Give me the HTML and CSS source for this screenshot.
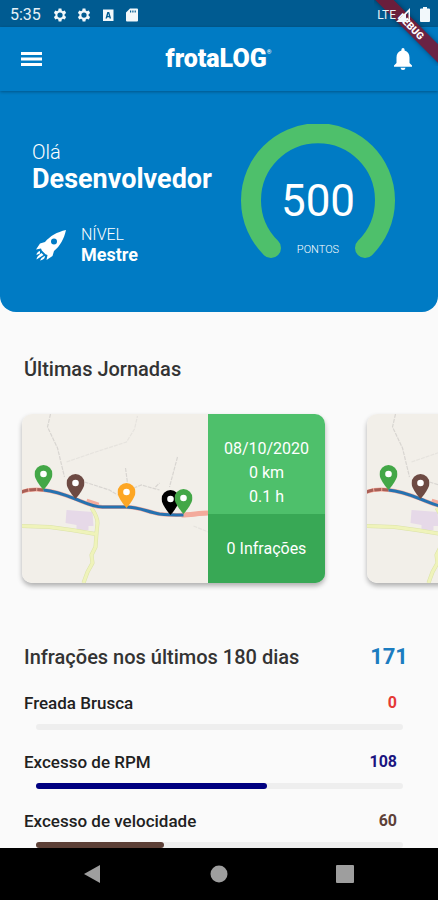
FILE: index.html
```html
<!DOCTYPE html>
<html lang="pt-BR">
<head>
    <meta charset="UTF-8">
    <meta name="viewport" content="width=device-width, initial-scale=1.0">
    <title>frotaLOG</title>
    <link rel="stylesheet" href="styles.css">
</head>
<body>
    <!-- Shared map drawing used by every journey card -->
    <svg class="defs" width="0" height="0" aria-hidden="true">
        <symbol id="pin" viewBox="0 0 18 25">
            <path d="M9 0a9 9 0 0 0-9 9c0 6 9 16 9 16s9-10 9-16a9 9 0 0 0-9-9z"/>
            <circle cx="9" cy="9" r="3.3" fill="#fff"/>
        </symbol>
        <symbol id="map" viewBox="0 0 187 169" preserveAspectRatio="xMidYMid slice">
            <rect width="187" height="169" fill="#f2efe9"/>
            <g fill="none" stroke="#d8d5d1" stroke-width="1.2" stroke-dasharray="4 1">
                <path d="M29 0l-3 13 10 21 7 29M63 68l25 8 8 5M104 54l2 15M112 74l8-3 18 5M134 73l4-4M156 43l-8 30"/>
                <path d="M45 48l26-9 34-11 8-13 3-13M172 112l15 6" stroke="#e6e3de"/>
            </g>
            <path d="M45 96l26 2 1 14-5 0 0 4-12 1 0-6-11-2z" fill="#e6d9e8"/>
            <g fill="none" stroke-linejoin="round">
                <path d="M0 112l28 1 22 3 24 4M70 94c4 6 6 10 6 15l-1 10-1 14-4 8 1 8-5 9-4 11" stroke="#dbe2a8" stroke-width="4"/>
                <path d="M0 112l28 1 22 3 24 4M70 94c4 6 6 10 6 15l-1 10-1 14-4 8 1 8-5 9-4 11" stroke="#eff3ba" stroke-width="3"/>
                <path d="M0 78c8-3 15-3 22-2 12 1 22 5 32 9s18 8 27 8h24c13 0 21 5 33 7 16 2 32 1 49-1" stroke="#f3aa9b" stroke-width="4"/>
                <path d="M160 101c9 0 18-2 27-2" stroke="#f3aa9b" stroke-width="5"/>
                <path d="M65 87l12 4" stroke="#f3aa9b" stroke-width="5"/>
                <path d="M0 78c8-3 15-3 22-2" stroke="#a95f56" stroke-width="3" stroke-dasharray="7 1"/>
                <path d="M22 76c12 1 22 5 32 9s18 8 27 8h24c13 0 21 5 33 7 8 1 15 1 24 1" stroke="#2672b0" stroke-width="3"/>
            </g>
            <use href="#pin" x="13" y="51" width="18" height="25" fill="#43a747"/>
            <use href="#pin" x="45" y="60" width="18" height="25" fill="#6d4a43"/>
            <use href="#pin" x="96" y="69" width="18" height="25" fill="#fda624"/>
            <use href="#pin" x="140" y="76" width="18" height="25" fill="#000"/>
            <use href="#pin" x="153" y="75" width="18" height="25" fill="#43a747"/>
        </symbol>
        <symbol id="gear" viewBox="0 0 24 24">
            <path fill-rule="evenodd" d="M9.6 1h4.8l.6 3.3 2 1.1 3.100-1.100 2.400 4.100-2.600 2.300v2.600l2.600 2.300-2.400 4.100-3.100-1.100-2 1.100-.6 3.300H9.600L9 19.700l-2-1.100-3.100 1.100-2.400-4.100 2.600-2.300v-2.600L1.500 8.400l2.400-4.100L7 5.400l2-1.100zM12 7.500a4.500 4.500 0 1 0 0 9 4.500 4.500 0 0 0 0-9z"/>
        </symbol>
    </svg>

    <div class="status-bar">
        <span class="clock">5:35</span>
        <svg class="status-icon" viewBox="0 0 24 24"><use href="#gear"/></svg>
        <svg class="status-icon" viewBox="0 0 24 24"><use href="#gear"/></svg>
        <svg class="status-icon" viewBox="0 0 14 14">
            <path fill-rule="evenodd" d="M2 1.500h10.500v11.500H2zM4.500 10.500h1.500l.3-1.200h2l.3 1.200h1.500L8.200 4H6.300zM6.700 8l.6-2.500.6 2.500z"/>
        </svg>
        <svg class="status-icon" viewBox="0 0 14 14">
            <path fill-rule="evenodd" d="M5 .5h7a1 1 0 0 1 1 1v11a1 1 0 0 1-1 1H2a1 1 0 0 1-1-1V4.500zM5 2.500v2h1.200v-2zM7.300 2.500v2h1.200v-2zM9.600 2.500v2h1.200v-2z"/>
        </svg>
        <div class="connection">
            <span class="network">LTE</span>
            <svg class="status-icon" viewBox="0 0 14 14"><path fill-rule="evenodd" d="M14 0v14H0zM12.500 4v8.500H10V6.500z"/></svg>
        </div>
        <svg class="battery" viewBox="0 0 10 15"><path d="M3 0h4v1.500h2a1 1 0 0 1 1 1V14a1 1 0 0 1-1 1H1a1 1 0 0 1-1-1V2.500a1 1 0 0 1 1-1h2z"/></svg>
    </div>
    <div class="debug"><span class="debug-label">DEBUG</span></div>

    <header class="app-bar">
        <button class="icon-button" aria-label="Menu">
            <svg width="22" height="16" viewBox="0 0 22 16"><path d="M0 1h21v3H0zM0 6.500h21v3H0zM0 12h21v3H0z"/></svg>
        </button>
        <h1 class="logo">frotaLOG<span class="logo-mark">®</span></h1>
        <button class="icon-button" aria-label="Notificações">
            <svg width="18" height="22" viewBox="0 0 18 22"><path d="M9 22a2.500 2.500 0 0 0 2.500-2.200h-5A2.500 2.500 0 0 0 9 22zM15.500 15V9.500c0-3.500-1.800-6.200-4.900-7V1.700a1.600 1.600 0 0 0-3.200 0v.8c-3.100.8-4.900 3.500-4.900 7V15L0 17.500v1.300h18v-1.300z"/></svg>
        </button>
    </header>

    <main class="content">
        <section class="hero">
            <div class="profile">
                <p class="hello">Olá</p>
                <p class="name">Desenvolvedor</p>
                <div class="level">
                    <svg width="32" height="32" viewBox="0 0 32 32">
                        <path fill-rule="evenodd" d="M31 1C22 3 15 7 10 13l-5 1.500-4 6 5-1 .8 2 3.700 3.700 2 .8-1 5 6-4L19 22c6-5 10-12 12-21zM19 9.500a3 3 0 1 1 0 6 3 3 0 0 1 0-6z"/>
                        <path d="M5 22c-2 .5-3.500 2-3.500 4l3.500-1.500zM6.500 24c-3 2-5 4.500-5 6.500l7-4.500zM9.500 27l-3 2-1.500 2.500c2.500-.3 4.500-1.500 5-4z"/>
                    </svg>
                    <div>
                        <p class="level-label">NÍVEL</p>
                        <p class="level-name">Mestre</p>
                    </div>
                </div>
            </div>
            <div class="gauge">
                <svg class="gauge-arc" viewBox="0 0 154 154">
                    <path d="M30 124a67 67 0 1 1 94 0" fill="none" stroke="#4ec06b" stroke-width="20" stroke-linecap="round"/>
                </svg>
                <div class="gauge-text">
                    <span class="points">500</span>
                    <span class="points-label">PONTOS</span>
                </div>
            </div>
        </section>

        <section class="journeys">
            <h2 class="title">Últimas Jornadas</h2>
            <div class="carousel">
                <article class="card">
                    <svg class="map"><use href="#map"/></svg>
                    <div class="card-info">
                        <p class="card-data">08/10/2020<br>0 km<br>0.1 h</p>
                        <p class="card-infractions">0 Infrações</p>
                    </div>
                </article>
                <article class="card">
                    <svg class="map"><use href="#map"/></svg>
                    <div class="card-info"></div>
                </article>
            </div>
        </section>

        <section class="infractions">
            <div class="infractions-head">
                <h2 class="title">Infrações nos últimos 180 dias</h2>
                <span class="total">171</span>
            </div>
            <div class="item">
                <div class="item-head"><span>Freada Brusca</span><span class="count red">0</span></div>
                <div class="track"></div>
            </div>
            <div class="item">
                <div class="item-head"><span>Excesso de RPM</span><span class="count navy">108</span></div>
                <div class="track"><div class="fill fill-navy" style="width: 63%"></div></div>
            </div>
            <div class="item">
                <div class="item-head"><span>Excesso de velocidade</span><span class="count brown">60</span></div>
                <div class="track"><div class="fill fill-brown" style="width: 35%"></div></div>
            </div>
        </section>
    </main>

    <nav class="nav-bar">
        <button class="nav-button" aria-label="Voltar">
            <svg width="18" height="18" viewBox="0 0 18 18"><path d="M16 0v18L0 9z"/></svg>
        </button>
        <button class="nav-button" aria-label="Início">
            <svg width="18" height="18" viewBox="0 0 18 18"><circle cx="9" cy="9" r="8.500"/></svg>
        </button>
        <button class="nav-button" aria-label="Recentes">
            <svg width="18" height="18" viewBox="0 0 18 18"><rect width="18" height="18" rx="1"/></svg>
        </button>
    </nav>
</body>
</html>
```

FILE: styles.css
```css
* {
    box-sizing: border-box;
}
body {
    margin: 0;
    height: 100vh;
    display: flex;
    flex-direction: column;
    overflow: hidden;
    background-color: #fafafa;
    color: #212121;
    font-family: Roboto, sans-serif;
}
h1, h2, p {
    margin: 0;
}
button {
    padding: 0;
    border: none;
    background: none;
    cursor: pointer;
}
svg {
    display: block;
}
.defs {
    position: absolute;
}

/* Status bar */
.status-bar {
    flex: none;
    display: flex;
    align-items: center;
    gap: 10px;
    height: 27px;
    padding: 2px 8px 0 10px;
    background-color: #005b91;
    color: #e6f0f6;
    fill: #f2f8fb;
}
.clock {
    font-size: 16px;
    margin-right: 2px;
}
.status-icon {
    width: 14px;
    height: 14px;
}
/* system icons stay above the debug ribbon */
.connection {
    z-index: 3;
    display: flex;
    align-items: center;
    margin-left: auto;
}
.network {
    font-size: 12px;
}
.battery {
    z-index: 3;
    width: 10px;
    height: 15px;
}
.debug {
    position: absolute;
    top: 0;
    right: 0;
    z-index: 2;
    width: 64px;
    height: 66px;
    overflow: hidden;
}
.debug-label {
    position: absolute;
    top: 20px;
    left: -13px;
    width: 100px;
    height: 13px;
    background-color: rgba(125, 20, 45, 0.85);
    box-shadow: 0 0 5px rgba(0, 0, 0, 0.4);
    color: #fff;
    font-size: 10px;
    font-weight: 900;
    line-height: 13px;
    text-align: center;
    transform: rotate(45deg);
}

/* App bar */
.app-bar {
    flex: none;
    z-index: 1;
    display: flex;
    justify-content: space-between;
    align-items: center;
    height: 64px;
    padding: 0 26px 0 21px;
    background-color: #007bc4;
    box-shadow: 0 1px 3px rgba(0, 0, 0, 0.3);
}
.icon-button {
    fill: #fff;
}
.logo {
    display: flex;
    color: #fff;
    font-size: 25px;
    font-weight: 900;
    line-height: 28px;
}
.logo-mark {
    font-size: 6px;
    line-height: 14px;
}

.content {
    flex: 1;
    min-height: 0;
    overflow: hidden;
}

/* Driver summary */
.hero {
    display: flex;
    justify-content: space-between;
    padding: 33px 43px 34px 32px;
    border-radius: 0 0 16px 16px;
    background-color: #007bc4;
    color: #fff;
}
.profile {
    padding-top: 16px;
}
.hello {
    font-size: 20px;
    font-weight: 300;
    line-height: 24px;
}
.name {
    font-size: 27px;
    font-weight: 700;
    line-height: 30px;
}
.level {
    display: flex;
    align-items: center;
    gap: 14px;
    margin-top: 31px;
    padding-left: 3px;
    fill: #fff;
}
.level-label {
    font-size: 16px;
    font-weight: 300;
    line-height: 20px;
}
.level-name {
    font-size: 18px;
    font-weight: 700;
    line-height: 20px;
}
.gauge {
    display: grid;
    width: 154px;
    height: 154px;
}
.gauge-arc, .gauge-text {
    grid-area: 1 / 1;
}
.gauge-text {
    display: flex;
    flex-direction: column;
    align-items: center;
    padding-top: 50px;
}
.points {
    font-size: 44px;
    line-height: 54px;
}
.points-label {
    margin-top: 15px;
    font-size: 11px;
    font-weight: 300;
    line-height: 14px;
}

/* Journeys */
.title {
    font-size: 20px;
    font-weight: 500;
    line-height: 24px;
    color: #333;
}
.journeys .title {
    padding: 45px 24px 0;
}
.carousel {
    display: flex;
    gap: 42px;
    overflow: hidden;
    padding: 33px 22px;
}
.card {
    flex: 0 0 303px;
    display: flex;
    height: 169px;
    overflow: hidden;
    border-radius: 10px;
    box-shadow: 0 3px 5px rgba(0, 0, 0, 0.3);
}
.map {
    flex: 1;
    height: 169px;
}
.card-info {
    width: 117px;
    display: flex;
    flex-direction: column;
    background-color: #4ec06b;
    color: #fff;
    font-size: 16px;
    text-align: center;
}
.card-data {
    flex: 1;
    padding-top: 23px;
    line-height: 24px;
}
.card-infractions {
    background-color: #38a855;
    line-height: 69px;
}

/* Infractions */
.infractions {
    padding: 29px 30px 0 24px;
}
.infractions-head {
    display: flex;
    justify-content: space-between;
    align-items: center;
    margin-bottom: 24px;
}
.total {
    color: #1b7cc0;
    font-size: 22px;
    font-weight: 700;
    line-height: 24px;
}
.item {
    height: 59px;
}
.item-head {
    display: flex;
    justify-content: space-between;
    padding-right: 11px;
    font-size: 17px;
    font-weight: 500;
    line-height: 20px;
}
.count {
    font-size: 16px;
    font-weight: 700;
}
.track {
    height: 6px;
    margin: 11px 5px 0 12px;
    border-radius: 3px;
    background-color: #eee;
}
.fill {
    height: 6px;
    border-radius: 3px;
}
.fill-navy {
    background-color: #000080;
}
.fill-brown {
    background-color: #5d4037;
}
.red {
    color: #e53935;
}
.navy {
    color: #1a1580;
}
.brown {
    color: #5d4037;
}

/* Android navigation */
.nav-bar {
    flex: none;
    display: flex;
    justify-content: space-between;
    align-items: center;
    height: 52px;
    padding: 0 84px;
    background-color: #000;
}
.nav-button {
    fill: #9e9e9e;
}
```
